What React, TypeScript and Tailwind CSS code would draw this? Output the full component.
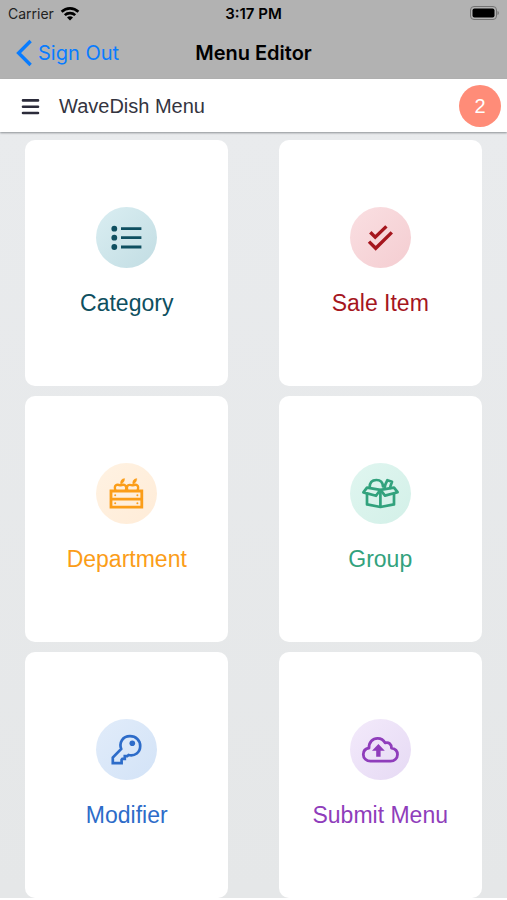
import type { ReactNode } from "react";

type Tile = {
  label: string;
  text: string;
  disc: string;
  icon: ReactNode;
};

const tiles: Tile[] = [
  {
    label: "Category",
    text: "text-[#0e4f60]",
    disc: "from-[#daeef2] to-[#c2dde3]",
    icon: (
      <>
        <path d="M25 21.7H45.4M25 30.7H45.4M25 40H45.4" strokeWidth="2.8" strokeLinecap="butt" />
        <g fill="currentColor" stroke="none">
          <circle cx="18.3" cy="21.7" r="2.9" />
          <circle cx="18.3" cy="30.7" r="2.9" />
          <circle cx="18.3" cy="40" r="2.9" />
        </g>
      </>
    ),
  },
  {
    label: "Sale Item",
    text: "text-[#a5161e]",
    disc: "from-[#fadfe2] to-[#f4cdd1]",
    icon: (
      <path
        d="M20.3 25.3L25.2 30.2L36.4 19.4M19 34.6L25.7 41.3L41.8 25.4"
        strokeWidth="3.4"
        strokeLinecap="butt"
        strokeLinejoin="miter"
      />
    ),
  },
  {
    label: "Department",
    text: "text-[#fb9d18]",
    disc: "from-[#fff2e2] to-[#ffecd8]",
    icon: (
      <>
        <path d="M15 28H45.8V44.2H15ZM15 36.2H45.8" strokeWidth="2.8" strokeLinejoin="miter" />
        <path
          d="M19.4 27.5C17.6 22.4 20.4 20.8 24.4 22.4C28.4 20.8 31.4 22.4 29.8 27.5M31.4 27.5C29.8 22.4 32.6 20.8 36.6 22.4C40.6 20.8 43.4 22.4 41.6 27.5"
          strokeWidth="2.3"
        />
        <path
          d="M24.6 21.4C24 18 25.4 16 28.6 15.6C28.6 18.4 27.2 20 24.6 21.4ZM36.8 21.4C36.2 18 37.6 16 40.8 15.6C40.8 18.4 39.4 20 36.8 21.4Z"
          fill="currentColor"
          strokeWidth=".4"
        />
        <g fill="currentColor" stroke="none">
          <circle cx="19.2" cy="32.2" r="1" />
          <circle cx="41.4" cy="32.2" r="1" />
          <circle cx="19.2" cy="40.2" r="1" />
          <circle cx="41.4" cy="40.2" r="1" />
        </g>
      </>
    ),
  },
  {
    label: "Group",
    text: "text-[#32a27d]",
    disc: "from-[#e0f6f0] to-[#d3f0e8]",
    icon: (
      <g strokeWidth="2.7">
        <path d="M17 31V41.4L30.4 44L44 41.4V31M30.4 27V44" />
        <path d="M17 24.6L13.4 29.4L26 32.8L30.4 26.8ZM44 24.6L47.6 29.2L35 32.6L30.4 26.8Z" />
        <path d="M19.6 24.6C19.6 19.2 22.6 17 26.4 17C30.2 17 32.8 19.4 33 23.4" />
        <path d="M34.6 24.8L35.4 21.4L37.4 17.2L42 18.8L40.6 22.8L40 25" />
      </g>
    ),
  },
  {
    label: "Modifier",
    text: "text-[#2d6cc9]",
    disc: "from-[#e1ecfa] to-[#d3e3f7]",
    icon: (
      <>
        <path
          d="M25.2 30C22.8 23.5 26.6 17.2 34 17.2C40 17.2 44.2 21.4 44.2 27C44.2 33.5 38.8 37.4 32.6 36L31.2 37.2H28.8V39.8H26.4L25.6 40.8V44.2H16.8V38.5Z"
          strokeWidth="2.7"
          strokeLinejoin="miter"
        />
        <circle cx="36.3" cy="24.2" r="2.8" fill="currentColor" stroke="none" />
      </>
    ),
  },
  {
    label: "Submit Menu",
    text: "text-[#8f3dbb]",
    disc: "from-[#f3eafb] to-[#e6daf4]",
    icon: (
      <>
        <path
          d="M20.5 42.2C16.5 42.2 13.3 39.3 13.3 35.5C13.3 32.2 15.6 29.6 19 29C18.8 23.2 22.6 19.3 27.6 19.3C31.1 19.3 33.6 21 35.1 23.9C38.6 22.6 41.8 25.3 41.5 29.2C45 29.8 47.5 32.3 47.5 35.6C47.5 39.3 44.4 42.2 40.6 42.2Z"
          strokeWidth="2.8"
        />
        <path d="M28.4 25L34.8 31.8H30.6V37.8H26.2V31.8H22Z" fill="currentColor" stroke="none" />
      </>
    ),
  },
];

function StatusBar() {
  return (
    <div className="grid h-7 grid-cols-3 items-center px-2 text-sm leading-7">
      <span className="flex items-center gap-1.5 text-[#222]">
        Carrier
        <svg className="h-4 w-5" viewBox="0 0 20 16" fill="none" stroke="#000" strokeWidth="2.6" aria-hidden="true">
          <path d="M1.6 5.8C6.3 1.2 13.7 1.2 18.4 5.8M4.8 9.2C7.6 6.4 12.4 6.4 15.2 9.2" />
          <path d="M7 11.4C8.7 9.8 11.3 9.8 13 11.4L10 14.6Z" fill="#000" stroke="none" />
        </svg>
      </span>
      <span className="text-center text-[15px] font-semibold text-black">3:17 PM</span>
      <svg className="h-4 w-8 justify-self-end" viewBox="0 0 32 16" fill="none" aria-hidden="true">
        <rect x="3.5" y=".5" width="26" height="13" rx="3.5" stroke="#737373" />
        <rect x="5.5" y="2.5" width="22" height="9" rx="2" fill="#000" />
        <path d="M30.5 5V9C32.3 8.2 32.3 5.8 30.5 5Z" fill="#737373" />
      </svg>
    </div>
  );
}

export default function App() {
  return (
    <div className="bg-white">
      <header className="bg-[#b2b2b2] font-[Inter,sans-serif]">
        <StatusBar />
        <nav className="grid h-[51px] grid-cols-[1fr_auto_1fr] items-start px-4 text-xl leading-[50px]">
          <a href="#sign-out" className="flex items-center gap-1 text-[#087cff]">
            <svg className="h-7 w-[18px]" viewBox="0 0 18 28" fill="none" stroke="currentColor" strokeWidth="3.4" aria-hidden="true">
              <path d="M14.6 2L2.6 14L14.6 26" />
            </svg>
            Sign Out
          </a>
          <h1 className="font-semibold text-black">Menu Editor</h1>
        </nav>
      </header>

      <div className="relative flex h-[53px] items-center bg-white pr-1.5 pl-[21px] font-['Liberation_Sans',Arial,sans-serif] text-xl text-[#34343f] shadow-[0_1px_2px_#8b9094]">
        <button type="button" aria-label="Open menu">
          <svg className="h-5 w-5" viewBox="0 0 20 20" fill="none" stroke="#2b2b3a" strokeWidth="2.6" strokeLinecap="round" aria-hidden="true">
            <path d="M2 4.4H17M2 10.7H17M2 17H17" />
          </svg>
        </button>
        <h2 className="ml-[18px]">WaveDish Menu</h2>
        <button type="button" aria-label="2 pending changes" className="ml-auto h-[42px] w-[42px] rounded-full bg-[#ff8c78] text-white">
          2
        </button>
      </div>

      <main className="grid grid-cols-2 gap-y-[10px] bg-linear-to-b from-[#e9ebed] to-[#e5e7e8] pt-2 font-['Liberation_Sans',Arial,sans-serif]">
        {tiles.map((tile) => (
          <button
            key={tile.label}
            type="button"
            className={`mx-auto flex w-4/5 flex-col items-center rounded-[10px] bg-white pt-[67px] pb-[68px] ${tile.text}`}
          >
            <span className={`rounded-full bg-linear-to-br ${tile.disc}`}>
              <svg
                className="h-[61px] w-[61px]"
                viewBox="0 0 61 61"
                fill="none"
                stroke="currentColor"
                strokeLinecap="round"
                strokeLinejoin="round"
                aria-hidden="true"
              >
                {tile.icon}
              </svg>
            </span>
            <span className="mt-5 text-[23px] leading-[30px]">{tile.label}</span>
          </button>
        ))}
      </main>
      <div className="h-0.5 bg-white" />
    </div>
  );
}
